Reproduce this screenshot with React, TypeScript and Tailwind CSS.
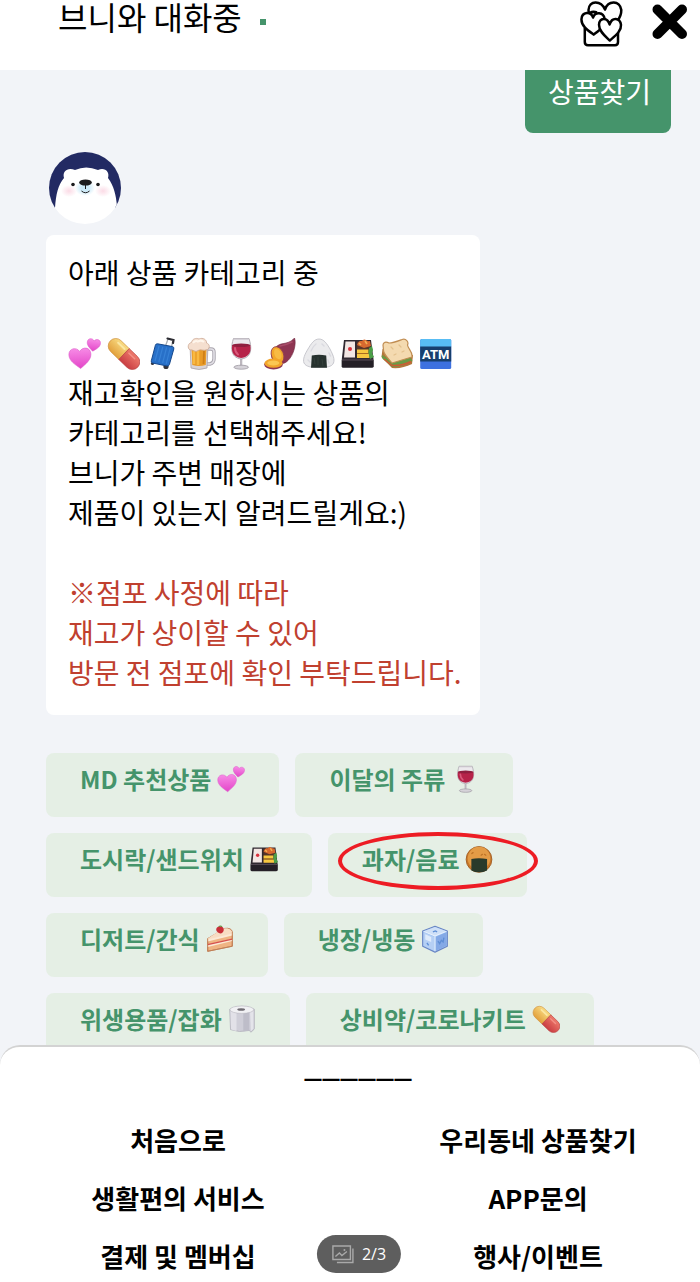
import type { ReactNode } from "react";

type EmojiName =
  | "hearts"
  | "pill"
  | "luggage"
  | "beer"
  | "wine"
  | "potato"
  | "riceball"
  | "bento"
  | "sandwich"
  | "atm"
  | "cracker"
  | "cake"
  | "ice"
  | "tissue";

const HEART = "M0 -5C-3 -10 -11 -9 -11 -2C-11 4 -5 8 0 12C5 8 11 4 11 -2C11 -9 3 -10 0 -5Z";

const drawings: Record<EmojiName, ReactNode> = {
  hearts: (
    <>
      <defs>
        <linearGradient id="pink" x1="0" y1="0" x2="0" y2="1">
          <stop offset="0" stopColor="#f78be6" />
          <stop offset="1" stopColor="#e345c8" />
        </linearGradient>
      </defs>
      <path d={HEART} transform="translate(12 19.5) rotate(-3)" fill="url(#pink)" stroke="#dd5fca" strokeWidth="0.6" />
      <path d={HEART} transform="translate(25.7 7) rotate(8) scale(0.6)" fill="url(#pink)" stroke="#dd5fca" />
    </>
  ),
  pill: (
    <>
      <defs>
        <linearGradient id="pillYellow" x1="0" y1="0" x2="0" y2="1">
          <stop offset="0" stopColor="#f9dc83" />
          <stop offset="1" stopColor="#e2a03c" />
        </linearGradient>
        <linearGradient id="pillRed" x1="0" y1="0" x2="0" y2="1">
          <stop offset="0" stopColor="#ee7a6c" />
          <stop offset="1" stopColor="#c93d42" />
        </linearGradient>
      </defs>
      <g transform="translate(17 17) rotate(44)">
        <path d="M0 -7.5H-11.5A7.5 7.5 0 0 0 -11.5 7.5H0Z" fill="url(#pillYellow)" stroke="#cf9240" strokeWidth="0.7" />
        <path d="M0 -7.5H11.5A7.5 7.5 0 0 1 11.5 7.5H0Z" fill="url(#pillRed)" stroke="#b94343" strokeWidth="0.7" />
        <path d="M-12 -4H-3" stroke="#fbe7a2" strokeWidth="2" strokeLinecap="round" />
        <path d="M3 -4H11" stroke="#f39186" strokeWidth="1.6" strokeLinecap="round" />
      </g>
    </>
  ),
  luggage: (
    <>
      <path d="M19.5 9L22 2L27 3L25.5 10" fill="none" stroke="#a8adb3" strokeWidth="1.3" />
      <path d="M21.5 1.5L27.5 3L27 6" fill="none" stroke="#2c2c32" strokeWidth="2.2" strokeLinecap="round" />
      <circle cx="20" cy="29.5" r="2.6" fill="#33343b" />
      <circle cx="6.5" cy="26.5" r="1.6" fill="#33343b" />
      <path d="M11.5 6.8L26.5 9.6Q28.3 10 27.8 12L23.4 27.5Q22.8 29.2 21 29L6.5 26Q4.8 25.6 5.3 23.8L9.4 8.2Q10 6.5 11.5 6.8Z" fill="#2870c8" stroke="#16488c" strokeWidth="1" />
      <path d="M13 9L9 24M16.8 9.8L12.8 25M20.6 10.5L16.6 26M24.2 11.2L20.2 26.8" stroke="#3781d6" strokeWidth="1.2" />
    </>
  ),
  beer: (
    <>
      <path d="M21 12H26Q29 12 29 15V22Q29 26 25 27H21" fill="none" stroke="#a9a5ae" strokeWidth="3.4" />
      <path d="M21 12H26Q29 12 29 15V22Q29 26 25 27H21" fill="none" stroke="#e2e0e6" strokeWidth="1.6" />
      <path d="M5 8H23L22 31Q14 34 6 31Z" fill="#d9d3d5" stroke="#aaa2a8" strokeWidth="0.8" />
      <path d="M6.5 11H21.5L20.8 28Q14 30 7.3 28Z" fill="#e99b26" />
      <path d="M9 14V27M13 14V28" stroke="#f9b942" strokeWidth="2.6" />
      <path d="M19 14L18.5 27" stroke="#cf7f17" strokeWidth="1.8" />
      <path d="M5 13C2 11 3 6 6.5 5.5C7 2 11 .5 14 2C18 0 22 3 21.5 6C25 7 25 11 22.5 12.5C18 14.5 16 11.5 13 13.5C10 16 8 12 5 13Z" fill="#f5dfcf" stroke="#cda996" strokeWidth="0.8" />
      <path d="M8 6Q10 3 13 4.5Q16 2.5 19 5" fill="none" stroke="#fff6ec" strokeWidth="2" />
    </>
  ),
  wine: (
    <>
      <path d="M16 20H18.3V29H16Z" fill="#bcb7be" />
      <ellipse cx="17.2" cy="30.2" rx="7.3" ry="2" fill="#d6d3d9" stroke="#9d98a1" strokeWidth="0.8" />
      <path d="M9.5 1.5H25C27.5 9 29 20.5 17.2 22C5.5 20.5 7 9 9.5 1.5Z" fill="#ece9ed" stroke="#aaa5ad" strokeWidth="0.9" />
      <path d="M8.2 8H26.3C27.5 15 25 20 17.2 21C9.5 20 7 15 8.2 8Z" fill="#b62349" />
      <ellipse cx="17.2" cy="8.2" rx="9" ry="1.8" fill="#8f1f3f" />
      <path d="M11 11Q11 15 14 17.5" fill="none" stroke="#d9587a" strokeWidth="2" strokeLinecap="round" />
      <path d="M10 2H24.6" stroke="#c9c5cc" strokeWidth="1.3" />
    </>
  ),
  potato: (
    <>
      <path d="M31.5 1C33.5 6 31 18 25 23.5C20 29 12 27 9 21C7 15 12 9 18 7C24 6 28 5 31.5 1Z" fill="#8e3552" stroke="#6f2740" strokeWidth="0.6" />
      <path d="M17 9Q23 8 29 5" fill="none" stroke="#a84c69" strokeWidth="1.6" strokeLinecap="round" />
      <ellipse cx="14.5" cy="18" rx="6" ry="8.6" transform="rotate(-22 14.5 18)" fill="#f3a72b" stroke="#93404f" strokeWidth="0.8" />
      <ellipse cx="14.8" cy="17" rx="3.4" ry="5.6" transform="rotate(-22 14.8 17)" fill="#f8bb43" />
      <ellipse cx="10.5" cy="27.5" rx="9.3" ry="5" fill="#8e3552" />
      <ellipse cx="10.5" cy="26.2" rx="9" ry="4.6" fill="#f2a42a" />
      <ellipse cx="10.3" cy="26" rx="6" ry="2.6" fill="#fbc752" />
    </>
  ),
  riceball: (
    <>
      <path d="M17 2C22 2 25 7 28 12C31 18 33 22 31.5 26C30 30 24 30.5 17 30.5C10 30.5 4 30 2 26C.5 22 3 17 6 12C9 7 12 2 17 2Z" fill="#ebebed" stroke="#bdbdc4" strokeWidth="0.8" />
      <path d="M9 14Q11 9 14 7M27 16L28.5 19M20 7L22 9M6 23L8 25M26 23L27 26" fill="none" stroke="#dadae0" strokeWidth="1.4" strokeLinecap="round" />
      <path d="M9.8 18.5Q17 17 24.2 18.5L25 30.8H9Z" fill="#27322f" />
      <path d="M12 21L13 27M16 20V28M20 22L21 29" stroke="#333f3b" strokeWidth="1" />
    </>
  ),
  bento: (
    <>
      <path d="M3 3H30L32.5 22V30H.8V22Z" fill="#302930" />
      <path d="M.8 23H32.5V29.5Q32.5 30.8 31 30.8H2Q.8 30.8 .8 29.5Z" fill="#252027" />
      <path d="M4.5 4.5H14V20.5H3Z" fill="#f2e6e3" />
      <circle cx="9" cy="12" r="2" fill="#d8323d" />
      <path d="M15.8 4.5H28.5L30.5 20.5H15.8Z" fill="#573529" />
      <path d="M16 8C18 2 21 5 22 3C24 1 26 5 29 4L30 9L23 11Z" fill="#d7692f" />
      <path d="M18 6L20 8M24 4L26 7" stroke="#f4b054" strokeWidth="1.6" />
      <path d="M16 12.5H27.5V16H16ZM16 17H28.5V21H16Z" fill="#f7c840" />
      <path d="M16 16.5H28" stroke="#bd7b21" strokeWidth="0.8" />
      <path d="M28 11L31 9L32 13L31 16L33 20L29 22L27.5 16Z" fill="#4c9f48" />
      <path d="M1 23H32.5" stroke="#5f535d" strokeWidth="0.9" />
    </>
  ),
  sandwich: (
    <>
      <path d="M2.5 12L1.5 20L12 31Q22 32 32 27L33 18Z" fill="#b3763b" />
      <path d="M2 18Q1 21 4 23L12 30Q22 30 32.5 24L30 20L12 24Z" fill="#6a9a45" />
      <path d="M4 22L12 28.5Q22 29 31 24.5" fill="none" stroke="#cf5a35" strokeWidth="1.6" />
      <path d="M3 8C3 5 6 4.5 9 6C13 6 18 4 22 2.5C26 1 29 5 27.5 8C28 12 33 15 32 20C25 22 19 24 12 26C9 22 3 17 3.5 13Z" fill="#f4dab0" stroke="#c08d52" strokeWidth="1.2" />
      <path d="M11 10L13 12M19 8L21 10M22 15L24 14M14 18L16 17" stroke="#e3c18d" strokeWidth="1.2" strokeLinecap="round" />
    </>
  ),
  atm: (
    <>
      <rect x="1.2" y="2" width="31" height="30" rx="1.6" fill="#3d71e0" />
      <path d="M1.2 3.5Q1.2 2 2.8 2H30.6Q32.2 2 32.2 3.5V10H1.2Z" fill="#58bdf4" />
      <rect x="1.2" y="9.5" width="31" height="15" fill="#173f6d" />
      <text x="16.7" y="22" textAnchor="middle" fontFamily="Roboto, sans-serif" fontSize="13" fontWeight="700" fill="#ffffff">
        ATM
      </text>
    </>
  ),
  cracker: (
    <>
      <circle cx="16.5" cy="17" r="15.2" fill="#c87829" stroke="#98551e" strokeWidth="0.9" />
      <circle cx="16.5" cy="15.5" r="13.3" fill="#e39b46" />
      <path d="M8 10L9.5 9M23 11L24.5 12M19 12L20.5 11" stroke="#bd7226" strokeWidth="1.5" strokeLinecap="round" />
      <path d="M7.5 16.5Q16 15 26 16.5V30Q16.5 34.5 7.5 30Z" fill="#293a2b" />
    </>
  ),
  cake: (
    <>
      <path d="M2 16L22 4Q30 3 31 8V25L2 31Z" fill="#efb483" stroke="#b86e46" strokeWidth="1" />
      <path d="M2 16L17 6Q25 1 31 8V11L2 18Z" fill="#f8ddc3" />
      <path d="M2 17L31 10V12.5L2 19.5Z" fill="#fbe9d5" />
      <path d="M2 23L31 16.5V19L2 26Z" fill="#fbe9d5" />
      <path d="M2 23.2L31 16.7" stroke="#d64f4d" strokeWidth="1.6" />
      <path d="M2 16V31L31 25V8" fill="none" stroke="#c07f55" strokeWidth="1" />
      <path d="M12 6Q12 2 16 1.5Q21 1.5 21 6Q20 10 17 10Q13 9.5 12 6Z" fill="#c92f38" />
      <path d="M15 2Q17 .5 19 2" fill="none" stroke="#5e963d" strokeWidth="1.2" />
    </>
  ),
  ice: (
    <>
      <path d="M16.5 1.5L31 7V25L16.5 32L2 25V7Z" fill="#9fc3f1" stroke="#6a86c4" strokeWidth="1.4" strokeLinejoin="round" />
      <path d="M16.5 2.5L30 7.5L16.5 13L3 7.5Z" fill="#cfe0f7" />
      <path d="M3 8.5L16 14V30.5L3 24.5Z" fill="#b5cff4" />
      <path d="M17 14L30 8.5V24.5L17 30.5Z" fill="#84a9e6" />
      <path d="M16.5 13V31M3 7.5L16.5 13L30 7.5" fill="none" stroke="#eaf3fe" strokeWidth="1.2" />
      <path d="M20 19L22 22L24 18L26 20L27 15M7 21L9 24M14 8L17 7L19 8" fill="none" stroke="#5f8fd6" strokeWidth="1.6" />
      <path d="M5 11L12 14V20L5 17Z" fill="#dfebfb" />
    </>
  ),
  tissue: (
    <>
      <path d="M2 5Q16 -2 31 5V28Q29 31 27 32L25 30Q13 33 3 29Z" fill="#cfced8" stroke="#a9a8b3" strokeWidth="0.8" />
      <path d="M3 7H10V30.5Q6 30 3.5 28.5Z" fill="#e2e1e8" />
      <path d="M18 8H25V30L18 31Z" fill="#bebdc9" />
      <path d="M26 8L30 7V28L27 31Z" fill="#e4e4ea" />
      <ellipse cx="16.3" cy="5.5" rx="14" ry="4.4" fill="#f1f1f4" stroke="#b9b8c1" strokeWidth="0.7" />
      <ellipse cx="15.5" cy="5.2" rx="4.6" ry="1.5" fill="#6f6b72" />
    </>
  ),
};

function Emoji({ name, className }: { name: EmojiName; className: string }) {
  return (
    <svg viewBox="0 0 33 33" className={`shrink-0 ${className}`} aria-hidden="true">
      {drawings[name]}
    </svg>
  );
}

function GiftIcon() {
  return (
    <svg viewBox="0 0 43 47" className="h-[47px] w-[43px]" fill="#fff" stroke="#000" strokeWidth="2.5" strokeLinejoin="round">
      <path d="M4.8 28V42Q4.8 45.2 8 45.2H35Q38 45.2 38 42V33" />
      <path d="M25 9.5C21 0 9 0 8.5 10C8.5 19 17 25 25 31C33 25 41.5 20 41.3 10C40 0 28 0 25 9.5Z" />
      <path d="M7.5 15Q11 10.5 17 12.5" fill="none" />
      <path d="M13 17.5C11 11 2 11.5 1.5 19C1 26 8 30.5 13.7 34.6C19 30.5 25.5 26 24.7 19C23.5 11.5 15 11.5 13 17.5Z" />
      <path d="M29.6 24.5C27.5 16.5 19 17.5 19 24.8C19 31.5 25 36 29.8 40.5C35 36 41.5 31.5 41 24.8C40 17.5 32 16.5 29.6 24.5Z" />
    </svg>
  );
}

function CloseIcon() {
  return (
    <svg viewBox="0 0 36 36" className="size-9" stroke="#000" strokeWidth="10" strokeLinecap="round">
      <path d="M5.5 5.5L30 30M30 5.5L5.5 30" />
    </svg>
  );
}

function BearAvatar() {
  return (
    <svg viewBox="0 0 72 72" className="size-18" role="img" aria-label="브니">
      <defs>
        <clipPath id="avatarClip">
          <circle cx="36" cy="36" r="36" />
        </clipPath>
        <radialGradient id="cheek">
          <stop offset="0" stopColor="#fbdbe6" />
          <stop offset="1" stopColor="#fbdbe6" stopOpacity="0" />
        </radialGradient>
        <radialGradient id="muzzle">
          <stop offset="0.4" stopColor="#cdeaf8" />
          <stop offset="1" stopColor="#cdeaf8" stopOpacity="0" />
        </radialGradient>
      </defs>
      <g clipPath="url(#avatarClip)">
        <rect width="72" height="56" fill="#222a63" />
        <path d="M0 72V56H6C7 42 9 33 15 26C13 19 19 15 26 18Q37 13 49 18C56 15 61 20 59 26C65 34 67 43 68 54V56H72V72Z" fill="#fff" />
        <ellipse cx="20" cy="39" rx="8" ry="6" fill="url(#cheek)" />
        <ellipse cx="54" cy="39" rx="8" ry="6" fill="url(#cheek)" />
        <ellipse cx="36" cy="36" rx="10" ry="8" fill="url(#muzzle)" />
        <circle cx="24" cy="32.5" r="1.8" fill="#1c1c1e" />
        <circle cx="49" cy="32.5" r="1.8" fill="#1c1c1e" />
        <ellipse cx="36.5" cy="30.5" rx="6.3" ry="3.1" fill="#1c1c1e" />
        <path d="M36.5 33V37M32.5 39Q36.5 42.5 40.5 39" fill="none" stroke="#1c1c1e" strokeWidth="1" />
      </g>
    </svg>
  );
}

function GalleryIcon() {
  return (
    <svg viewBox="0 0 22 19" className="h-[19px] w-[22px]" fill="none" stroke="#a9a9a9" strokeWidth="1.4">
      <path d="M1 1H18.5V14.5H1ZM21 3.5V17.5H5" />
      <path d="M3.5 11.5L7.5 8L10 10.5L15 6.5" />
      <circle cx="12.5" cy="5" r="1" fill="#a9a9a9" stroke="none" />
    </svg>
  );
}

const rowEmojis: EmojiName[] = [
  "hearts",
  "pill",
  "luggage",
  "beer",
  "wine",
  "potato",
  "riceball",
  "bento",
  "sandwich",
  "atm",
];

const categories: { label: string; emoji: EmojiName; marked?: boolean }[] = [
  { label: "MD 추천상품", emoji: "hearts" },
  { label: "이달의 주류", emoji: "wine" },
  { label: "도시락/샌드위치", emoji: "bento" },
  { label: "과자/음료", emoji: "cracker", marked: true },
  { label: "디저트/간식", emoji: "cake" },
  { label: "냉장/냉동", emoji: "ice" },
  { label: "위생용품/잡화", emoji: "tissue" },
  { label: "상비약/코로나키트", emoji: "pill" },
];

const menu = ["처음으로", "우리동네 상품찾기", "생활편의 서비스", "APP문의", "결제 및 멤버십", "행사/이벤트"];

export default function App() {
  return (
    <div className="relative flex h-screen flex-col overflow-hidden bg-white font-['Noto_Sans_CJK_KR',sans-serif] text-black">
      <header className="flex h-[70px] shrink-0 items-start justify-between pr-3 pl-[58px]">
        <div className="flex items-center gap-[18px]">
          <h1 className="text-[32px] leading-8">브니와 대화중</h1>
          <span className="mt-3 size-1.5 bg-[#45946b]" />
        </div>
        <div className="flex items-start gap-[29px]">
          <button type="button" aria-label="선물">
            <GiftIcon />
          </button>
          <button type="button" aria-label="닫기" className="pt-1">
            <CloseIcon />
          </button>
        </div>
      </header>

      <main className="min-h-0 flex-1 overflow-hidden bg-[#f2f4f8] pr-[29px] pl-[46px]">
        <div className="flex justify-end">
          <p className="rounded-b-lg bg-[#45946b] pt-px pr-5 pb-[22px] pl-[23px] text-[28px] leading-10 text-white">
            상품찾기
          </p>
        </div>

        <div className="mt-[19px] ml-[3px]">
          <BearAvatar />
        </div>

        <section className="mt-[11px] w-fit rounded-lg bg-white pt-[17px] pr-[18px] pb-[23px] pl-[22px] text-[28px] leading-10">
          <p>아래 상품 카테고리 중</p>
          <div className="mt-10 flex h-10 items-end gap-1.5 pb-0.5">
            {rowEmojis.map((name) => (
              <Emoji key={name} name={name} className="size-[33px]" />
            ))}
          </div>
          <p>
            재고확인을 원하시는 상품의
            <br />
            카테고리를 선택해주세요!
            <br />
            브니가 주변 매장에
            <br />
            제품이 있는지 알려드릴게요:)
          </p>
          <p className="mt-10 text-[#c0402f]">
            ※점포 사정에 따라
            <br />
            재고가 상이할 수 있어
            <br />
            방문 전 점포에 확인 부탁드립니다.
          </p>
        </section>

        <div className="mt-[38px] flex flex-wrap gap-4">
          {categories.map((c) => (
            <button
              key={c.label}
              type="button"
              className="relative flex items-center gap-1.5 rounded-lg bg-[#e5efe5] px-[34px] pt-1.5 pb-[18px] text-2xl leading-10 font-bold text-[#45946b]"
            >
              {c.label}
              <Emoji name={c.emoji} className="size-7" />
              {c.marked && (
                <span className="absolute -top-px -right-[11px] bottom-[7px] left-2.5 rounded-[50%] border-4 border-[#ed1c24]" />
              )}
            </button>
          ))}
        </div>
      </main>

      <nav className="relative -mt-4 shrink-0 rounded-t-[20px] border-t-2 border-[#d3d3d3] bg-white pb-1.5">
        <div className="text-center text-[32px] leading-[30px] font-medium">
          <span className="pl-4">______</span>
        </div>
        <div className="mt-[43px] grid grid-cols-2 gap-x-9 gap-y-[18px] pl-4 text-center text-[26px] leading-10 font-bold">
          {menu.map((item) => (
            <a key={item} href="#">
              {item}
            </a>
          ))}
        </div>
      </nav>

      <div className="absolute bottom-[9px] left-1/2 ml-[9px] flex h-[38px] -translate-x-1/2 items-center gap-2 rounded-full bg-[#5e5e5e] px-[15px] font-['Open_Sans',sans-serif] text-base text-white">
        <GalleryIcon />
        <span>2/3</span>
      </div>
    </div>
  );
}
